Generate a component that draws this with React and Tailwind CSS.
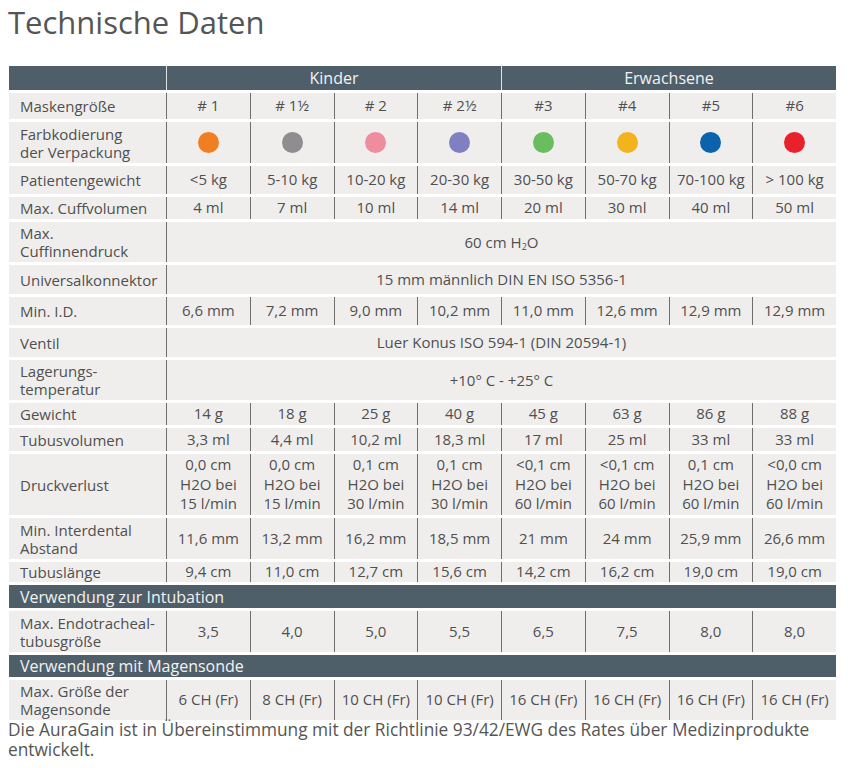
const font = { fontFamily: '"Open Sans", "Liberation Sans", sans-serif' };

const dots = [
    "bg-[#f07f22]",
    "bg-[#8f8d8f]",
    "bg-[#ef8c9e]",
    "bg-[#7f80c2]",
    "bg-[#69bd5e]",
    "bg-[#f2b31c]",
    "bg-[#0b62ad]",
    "bg-[#e8212b]",
];

// h = row height in px, values: 8 cells or a single spanning value
const rows = [
    { label: "Maskengröße", h: "h-[26px]", values: ["# 1", "# 1½", "# 2", "# 2½", "#3", "#4", "#5", "#6"] },
    { label: ["Farbkodierung", "der Verpackung"], h: "h-[41px]", dots: true },
    { label: "Patientengewicht", h: "h-[28px]", values: ["<5 kg", "5-10 kg", "10-20 kg", "20-30 kg", "30-50 kg", "50-70 kg", "70-100 kg", "> 100 kg"] },
    { label: "Max. Cuffvolumen", h: "h-[22px]", values: ["4 ml", "7 ml", "10 ml", "14 ml", "20 ml", "30 ml", "40 ml", "50 ml"] },
    {
        label: ["Max.", "Cuffinnendruck"],
        h: "h-[40px]",
        span: (
            <span>
                60 cm H<sub className="text-[9px]">2</sub>O
            </span>
        ),
    },
    { label: "Universalkonnektor", h: "h-[29px]", span: "15 mm männlich DIN EN ISO 5356-1" },
    { label: "Min. I.D.", h: "h-[28px]", values: ["6,6 mm", "7,2 mm", "9,0 mm", "10,2 mm", "11,0 mm", "12,6 mm", "12,9 mm", "12,9 mm"] },
    { label: "Ventil", h: "h-[29px]", span: "Luer Konus ISO 594-1 (DIN 20594-1)" },
    { label: ["Lagerungs-", "temperatur"], h: "h-[40px]", span: "+10° C - +25° C" },
    { label: "Gewicht", h: "h-[22px]", values: ["14 g", "18 g", "25 g", "40 g", "45 g", "63 g", "86 g", "88 g"] },
    { label: "Tubusvolumen", h: "h-[23px]", values: ["3,3 ml", "4,4 ml", "10,2 ml", "18,3 ml", "17 ml", "25 ml", "33 ml", "33 ml"] },
    {
        label: "Druckverlust",
        h: "h-[61px]",
        values: [
            ["0,0 cm", "H2O bei", "15 l/min"],
            ["0,0 cm", "H2O bei", "15 l/min"],
            ["0,1 cm", "H2O bei", "30 l/min"],
            ["0,1 cm", "H2O bei", "30 l/min"],
            ["<0,1 cm", "H2O bei", "60 l/min"],
            ["<0,1 cm", "H2O bei", "60 l/min"],
            ["0,1 cm", "H2O bei", "60 l/min"],
            ["<0,0 cm", "H2O bei", "60 l/min"],
        ],
    },
    { label: ["Min. Interdental", "Abstand"], h: "h-[41px]", values: ["11,6 mm", "13,2 mm", "16,2 mm", "18,5 mm", "21 mm", "24 mm", "25,9 mm", "26,6 mm"] },
    { label: "Tubuslänge", h: "h-[20px]", values: ["9,4 cm", "11,0 cm", "12,7 cm", "15,6 cm", "14,2 cm", "16,2 cm", "19,0 cm", "19,0 cm"] },
    { section: "Verwendung zur Intubation", h: "h-[23px]" },
    { label: ["Max. Endotracheal-", "tubusgröße"], h: "h-[41px]", values: ["3,5", "4,0", "5,0", "5,5", "6,5", "7,5", "8,0", "8,0"] },
    { section: "Verwendung mit Magensonde", h: "h-[22px]" },
    { label: ["Max. Größe der", "Magensonde"], h: "h-[40px]", values: ["6 CH (Fr)", "8 CH (Fr)", "10 CH (Fr)", "10 CH (Fr)", "16 CH (Fr)", "16 CH (Fr)", "16 CH (Fr)", "16 CH (Fr)"] },
];

const gridCols = "grid grid-cols-[157px_repeat(8,minmax(0,1fr))]";

function Label({ label }) {
    const lines = Array.isArray(label) ? label : [label];
    return (
        <div className="flex flex-col justify-center pl-[11px] leading-[18px] whitespace-nowrap">
            {lines.map((l, i) => (
                <span key={i}>{l}</span>
            ))}
        </div>
    );
}

function Cell({ children }) {
    return (
        <div className="flex flex-col items-center justify-center border-l border-[#6e6e6e] leading-[19.5px] whitespace-nowrap">
            {children}
        </div>
    );
}

function Row({ row }) {
    if (row.section) {
        return (
            <div className={`${row.h} flex items-center bg-[#4f5f6a] pl-[11px] text-[16px] text-[#f2f2f2]`}>
                {row.section}
            </div>
        );
    }

    return (
        <div className={`${gridCols} ${row.h} bg-[#efeeed]`}>
            <Label label={row.label} />
            {row.span && (
                <div className="col-span-8 flex items-center justify-center border-l border-[#6e6e6e]">
                    {row.span}
                </div>
            )}
            {row.dots &&
                dots.map((c, i) => (
                    <Cell key={i}>
                        <span className={`block h-[21px] w-[21px] rounded-full ${c}`} />
                    </Cell>
                ))}
            {row.values &&
                row.values.map((v, i) => (
                    <Cell key={i}>
                        {Array.isArray(v) ? v.map((l, j) => <span key={j}>{l}</span>) : v}
                    </Cell>
                ))}
        </div>
    );
}

export default function App() {
    return (
        <div className="min-h-[768px] w-[849px] bg-white text-[#505050]" style={font}>
            {/* ================= TITLE ================= */}
            <h1 className="pl-[8px] pt-[2px] text-[31px] leading-[40px] text-[#555555]">
                Technische Daten
            </h1>

            {/* ================= TABLE ================= */}
            <div className="ml-[9px] mt-[24px] flex w-[827px] flex-col gap-[3px] text-[15px]">
                <div className={`${gridCols} h-[24px] bg-[#4f5f6a] text-[16px] text-[#f2f2f2]`}>
                    <div />
                    <div className="col-span-4 flex items-center justify-center border-l border-[#dfe4e8]">
                        Kinder
                    </div>
                    <div className="col-span-4 flex items-center justify-center border-l border-[#dfe4e8]">
                        Erwachsene
                    </div>
                </div>

                {rows.map((row, i) => (
                    <Row key={i} row={row} />
                ))}
            </div>

            {/* ================= FOOTER ================= */}
            <p className="pl-[8px] text-[17.3px] leading-[20px] text-[#555555]">
                <span className="whitespace-nowrap">
                    Die AuraGain ist in Übereinstimmung mit der Richtlinie 93/42/EWG des Rates über Medizinprodukte
                </span>
                <br />
                entwickelt.
            </p>
        </div>
    );
}
